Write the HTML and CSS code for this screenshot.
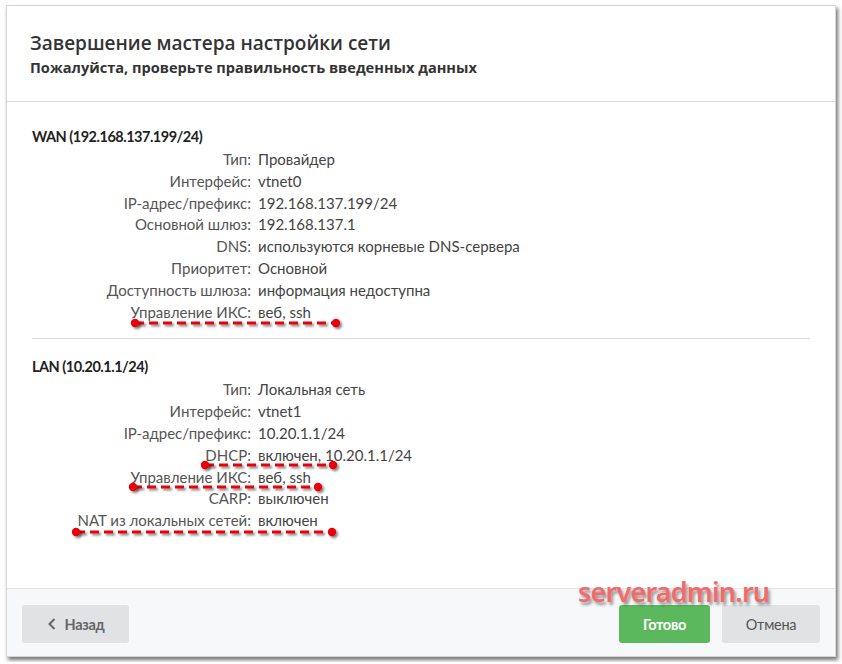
FILE: index.html
```html
<!DOCTYPE html>
<html lang="ru">
<head>
    <meta charset="UTF-8">
    <title>Завершение мастера настройки сети</title>
    <link rel="stylesheet" href="styles.css">
</head>
<body>
    <div class="dialog">
        <div class="dialog-header">
            <div class="title">Завершение мастера настройки сети</div>
            <div class="subtitle">Пожалуйста, проверьте правильность введенных данных</div>
        </div>

        <div class="dialog-body">
            <div class="iface">
                <div class="iface-name">WAN (192.168.137.199/24)</div>
                <div class="rows">
                    <span class="key">Тип:</span><span class="val">Провайдер</span>
                    <span class="key">Интерфейс:</span><span class="val">vtnet0</span>
                    <span class="key">IP-адрес/префикс:</span><span class="val">192.168.137.199/24</span>
                    <span class="key">Основной шлюз:</span><span class="val">192.168.137.1</span>
                    <span class="key">DNS:</span><span class="val">используются корневые DNS-сервера</span>
                    <span class="key">Приоритет:</span><span class="val">Основной</span>
                    <span class="key">Доступность шлюза:</span><span class="val">информация недоступна</span>
                    <span class="key">Управление ИКС:</span><span class="val">веб, ssh</span>
                </div>
            </div>

            <div class="iface last">
                <div class="iface-name">LAN (10.20.1.1/24)</div>
                <div class="rows">
                    <span class="key">Тип:</span><span class="val">Локальная сеть</span>
                    <span class="key">Интерфейс:</span><span class="val">vtnet1</span>
                    <span class="key">IP-адрес/префикс:</span><span class="val">10.20.1.1/24</span>
                    <span class="key">DHCP:</span><span class="val">включен, 10.20.1.1/24</span>
                    <span class="key">Управление ИКС:</span><span class="val">веб, ssh</span>
                    <span class="key">CARP:</span><span class="val">выключен</span>
                    <span class="key">NAT из локальных сетей:</span><span class="val">включен</span>
                </div>
            </div>
        </div>

        <div class="dialog-footer">
            <button class="btn btn-back">
                <svg width="10" height="14" viewBox="0 0 10 14"><path d="M7.5 2 L2.5 7 L7.5 12" fill="none" stroke="#666" stroke-width="2"/></svg>
                Назад
            </button>
            <div class="spacer"></div>
            <button class="btn btn-ok">Готово</button>
            <button class="btn btn-cancel">Отмена</button>
        </div>
    </div>

    <div class="watermark">serveradmin.ru</div>

    <!-- red dashed marks drawn over the dialog -->
    <svg class="marks" width="842" height="664" viewBox="0 0 842 664">
        <defs>
            <filter id="sh" x="-10%" y="-200%" width="120%" height="500%">
                <feDropShadow dx="2" dy="2" stdDeviation="1.2" flood-color="#000" flood-opacity="0.45"/>
            </filter>
        </defs>
        <g filter="url(#sh)" stroke="#e8000b" stroke-width="3" stroke-dasharray="9 5" fill="#e8000b">
            <line x1="135" y1="323" x2="336" y2="323"/>
            <line x1="205" y1="465" x2="333" y2="465"/>
            <line x1="133" y1="487" x2="318" y2="487"/>
            <line x1="76" y1="532" x2="332" y2="532"/>
        </g>
        <g filter="url(#sh)" fill="#e8000b">
            <circle cx="135" cy="323" r="4.2"/><circle cx="336" cy="323" r="4.2"/>
            <circle cx="205" cy="465" r="4.2"/><circle cx="333" cy="465" r="4.2"/>
            <circle cx="133" cy="487" r="4.2"/><circle cx="318" cy="487" r="4.2"/>
            <circle cx="76" cy="532" r="4.2"/><circle cx="332" cy="532" r="4.2"/>
        </g>
    </svg>
</body>
</html>
```

FILE: styles.css
```css
body { margin: 0; padding: 5px 6px; background: #fff; font-family: Lato, "Open Sans", sans-serif; color: #444; }

.dialog { width: 830px; height: 652px; box-sizing: border-box; background: #fff; border: 1px solid #d6d6d6; box-shadow: 2px 3px 4px rgba(0,0,0,0.55); display: flex; flex-direction: column; }

.dialog-header { height: 96px; box-sizing: border-box; padding: 24px 23px 0; border-bottom: 1px solid #dcdcdc; }
.title { font-family: "Open Sans", sans-serif; font-weight: 600; font-size: 19px; line-height: 26px; color: #333; }
.subtitle { font-family: "Open Sans", sans-serif; font-weight: 700; font-size: 14.6px; line-height: 22px; color: #333; }

.dialog-body { flex: 1; padding: 24px 25px 0; }
.iface { border-bottom: 1px solid #dcdcdc; padding-bottom: 15px; margin-bottom: 17px; }
.iface.last { border-bottom: none; }
.iface-name { font-weight: 700; font-size: 14.5px; line-height: 22px; color: #222; letter-spacing: -0.5px; margin-bottom: 1px; }
.rows { display: grid; grid-template-columns: 219px 1fr; column-gap: 7px; font-size: 15px; line-height: 21.8px; }
.key { text-align: right; color: #555; }
.val { color: #444; }

.dialog-footer { height: 68px; box-sizing: border-box; background: #f7f8fa; border-top: 1px solid #e2e2e2; padding: 16px 15px 0; display: flex; align-items: flex-start; gap: 12px; }
.spacer { flex: 1; }
.btn { height: 38px; border: none; border-radius: 3px; font-family: Lato, sans-serif; font-weight: 700; font-size: 14.5px; letter-spacing: -0.3px; display: flex; align-items: center; justify-content: center; gap: 8px; }
.btn-back { width: 107px; background: #e1e2e4; color: #666; }
.btn-ok { width: 91px; background: #5cb85c; color: #fff; }
.btn-cancel { width: 98px; background: #e1e2e4; color: #555; font-weight: 400; }

.watermark { position: absolute; left: 578px; top: 573px; font-family: "Noto Sans", "Open Sans", sans-serif; font-weight: 600; font-size: 27px; letter-spacing: -0.8px; color: #f46a6a; text-shadow: 2px 3px 3px rgba(0,0,0,0.4); }

.marks { position: absolute; left: 0; top: 0; pointer-events: none; }
```
